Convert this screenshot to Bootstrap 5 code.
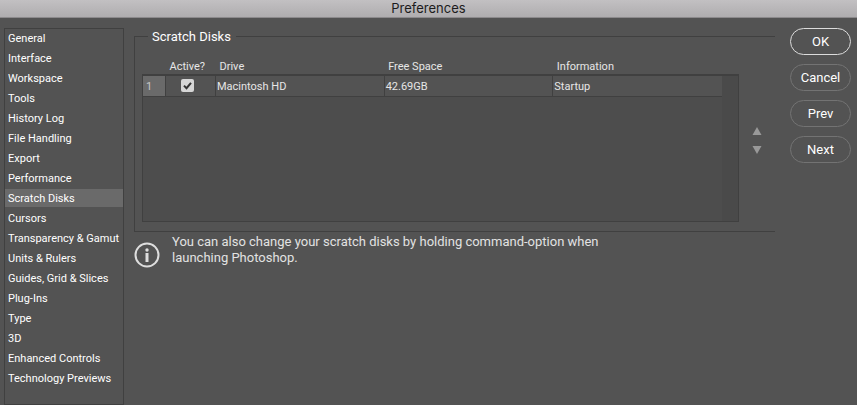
<!DOCTYPE html>
<html lang="en">
<head>
<meta charset="utf-8">
<meta name="viewport" content="width=device-width, initial-scale=1">
<title>Preferences</title>
<link href="https://cdn.jsdelivr.net/npm/bootstrap@5.3.0/dist/css/bootstrap.min.css" rel="stylesheet">
<style>
  body { background: #535353; color: #e6e6e6; font-family: Roboto, "Liberation Sans", sans-serif; font-size: 11px; line-height: 18px; }
  .title-bar { height: 18px; background: linear-gradient(#c2c0c2, #afadaf); border-bottom: 1px solid #8c8a8c; color: #1c1c1c; }
  .title-bar h1 { font-family: Inter, Roboto, sans-serif; font-size: 13px; line-height: 16px; font-weight: 400; }
  .dialog { padding: 10px 6px 0 4px; }
  .sections { width: 120px; border: 1px solid #404040; gap: 2px; }
  .sections .nav-link { color: #fff; padding: 2px 3px 0; line-height: 16px; white-space: nowrap; }
  .sections .nav-link.active { background: #6a6a6a; }
  .panel { margin: -2px 0 0 10px; }
  .group { border: 1px solid #404040; border-right: 0; padding: 0 0 9px 7px; }
  .group legend { float: none; width: auto; margin: 0 0 0 6px; padding: 2px 5px 0 4px; font-size: 13px; line-height: 18px; color: #fff; }
  .disks { table-layout: fixed; width: 100%; margin-top: 14px; border-collapse: collapse; color: #e6e6e6; }
  .disks th { font-weight: 400; padding: 0 0 0 4px; height: 14px; line-height: 14px; }
  .disks td { border: 1px solid #404040; height: 21px; line-height: 16px; padding: 2px 0 0 1px; }
  .disks tbody tr:first-child td { border-top-width: 2px; }
  .disks .col-number { width: 23px; }
  .disks .col-active { width: 50px; }
  .disks .col-scroll { width: 17px; }
  .disks .number { background: #6a6a6a; color: #c8c8c8; padding-left: 3px; }
  .disks .blank { background: #4d4d4d; height: 125px; }
  .disks .track { background: #4a4a4a; border-left: 0; }
  .disks .last { border-right: 0; }
  .disks .check-cell { padding: 0 6px 0 0; }
  .disks .form-check-input { width: 13px; height: 13px; margin: 0; border: 0; border-radius: 2px; background-color: #d6d6d6; vertical-align: middle; }
  .disks .form-check-input:checked { background-color: #d6d6d6; background-size: 13px; background-image: url("data:image/svg+xml,%3Csvg xmlns='http://www.w3.org/2000/svg' viewBox='0 0 13 13'%3E%3Cpath fill='none' stroke='%23333' stroke-width='2' d='M3 6.6l2.5 2.6L10 3.8'/%3E%3C/svg%3E"); }
  .order { width: 36px; padding-top: 14px; gap: 11px; }
  .order .btn { width: 10px; height: 8px; line-height: 0; }
  .order svg { display: block; fill: #999; }
  .hint { gap: 12px; margin-top: 2px; font-size: 13px; line-height: 16px; color: #e2e2e2; }
  .hint p { max-width: 440px; }
  .hint svg { margin-top: 8px; }
  .actions { width: 61px; margin-left: 15px; gap: 9px; }
  .actions .btn { height: 27px; border: 1px solid #737373; border-radius: 14px; color: #fff; font-size: 13px; line-height: 25px; padding: 0; }
  .actions .btn-default { border-color: #dcdcdc; }
</style>
<script src="https://cdn.jsdelivr.net/npm/bootstrap@5.3.0/dist/js/bootstrap.bundle.min.js"></script>
</head>
<body class="d-flex flex-column min-vh-100">
<header class="title-bar text-center flex-shrink-0"><h1 class="m-0">Preferences</h1></header>
<div class="dialog d-flex flex-grow-1">
  <nav class="sections nav flex-column flex-nowrap flex-shrink-0" aria-label="Preference sections">
    <a class="nav-link" href="#">General</a>
    <a class="nav-link" href="#">Interface</a>
    <a class="nav-link" href="#">Workspace</a>
    <a class="nav-link" href="#">Tools</a>
    <a class="nav-link" href="#">History Log</a>
    <a class="nav-link" href="#">File Handling</a>
    <a class="nav-link" href="#">Export</a>
    <a class="nav-link" href="#">Performance</a>
    <a class="nav-link active" aria-current="page" href="#">Scratch Disks</a>
    <a class="nav-link" href="#">Cursors</a>
    <a class="nav-link" href="#">Transparency &amp; Gamut</a>
    <a class="nav-link" href="#">Units &amp; Rulers</a>
    <a class="nav-link" href="#">Guides, Grid &amp; Slices</a>
    <a class="nav-link" href="#">Plug-Ins</a>
    <a class="nav-link" href="#">Type</a>
    <a class="nav-link" href="#">3D</a>
    <a class="nav-link" href="#">Enhanced Controls</a>
    <a class="nav-link" href="#">Technology Previews</a>
  </nav>
  <main class="panel flex-grow-1">
    <fieldset class="group">
      <legend>Scratch Disks</legend>
      <div class="d-flex">
        <div class="flex-grow-1">
          <table class="disks">
            <colgroup><col class="col-number"><col class="col-active"><col><col><col><col class="col-scroll"></colgroup>
            <thead>
              <tr><th></th><th scope="col" id="active-head">Active?</th><th scope="col">Drive</th><th scope="col">Free Space</th><th scope="col">Information</th><th></th></tr>
            </thead>
            <tbody>
              <tr>
                <td class="number">1</td>
                <td class="check-cell text-center"><input class="form-check-input" type="checkbox" aria-labelledby="active-head" checked></td>
                <td>Macintosh HD</td><td>42.69GB</td><td class="last">Startup</td>
                <td class="track" rowspan="2"></td>
              </tr>
              <tr><td class="blank last" colspan="5"></td></tr>
            </tbody>
          </table>
        </div>
        <div class="order d-flex flex-column flex-shrink-0 align-items-center justify-content-center">
          <button class="btn p-0 border-0" type="button" aria-label="Move up"><svg width="10" height="8" viewBox="0 0 10 8"><path d="M5 0l4.500 8h-9z"/></svg></button>
          <button class="btn p-0 border-0" type="button" aria-label="Move down"><svg width="10" height="8" viewBox="0 0 10 8"><path d="M.5 0h9L5 8z"/></svg></button>
        </div>
      </div>
    </fieldset>
    <div class="hint d-flex align-items-start">
      <svg class="flex-shrink-0" width="26" height="26" viewBox="0 0 26 26" aria-hidden="true"><circle cx="13" cy="13" r="11.500" fill="none" stroke="#dedede" stroke-width="2"/><circle cx="13" cy="8" r="1.700" fill="#dedede"/><path d="M11.500 11h3v9h-3z" fill="#dedede"/></svg>
      <p class="m-0">You can also change your scratch disks by holding command-option when launching Photoshop.</p>
    </div>
  </main>
  <div class="actions d-flex flex-column flex-shrink-0">
    <button class="btn btn-default" type="button">OK</button>
    <button class="btn" type="button">Cancel</button>
    <button class="btn" type="button">Prev</button>
    <button class="btn" type="button">Next</button>
  </div>
</div>
</body>
</html>
